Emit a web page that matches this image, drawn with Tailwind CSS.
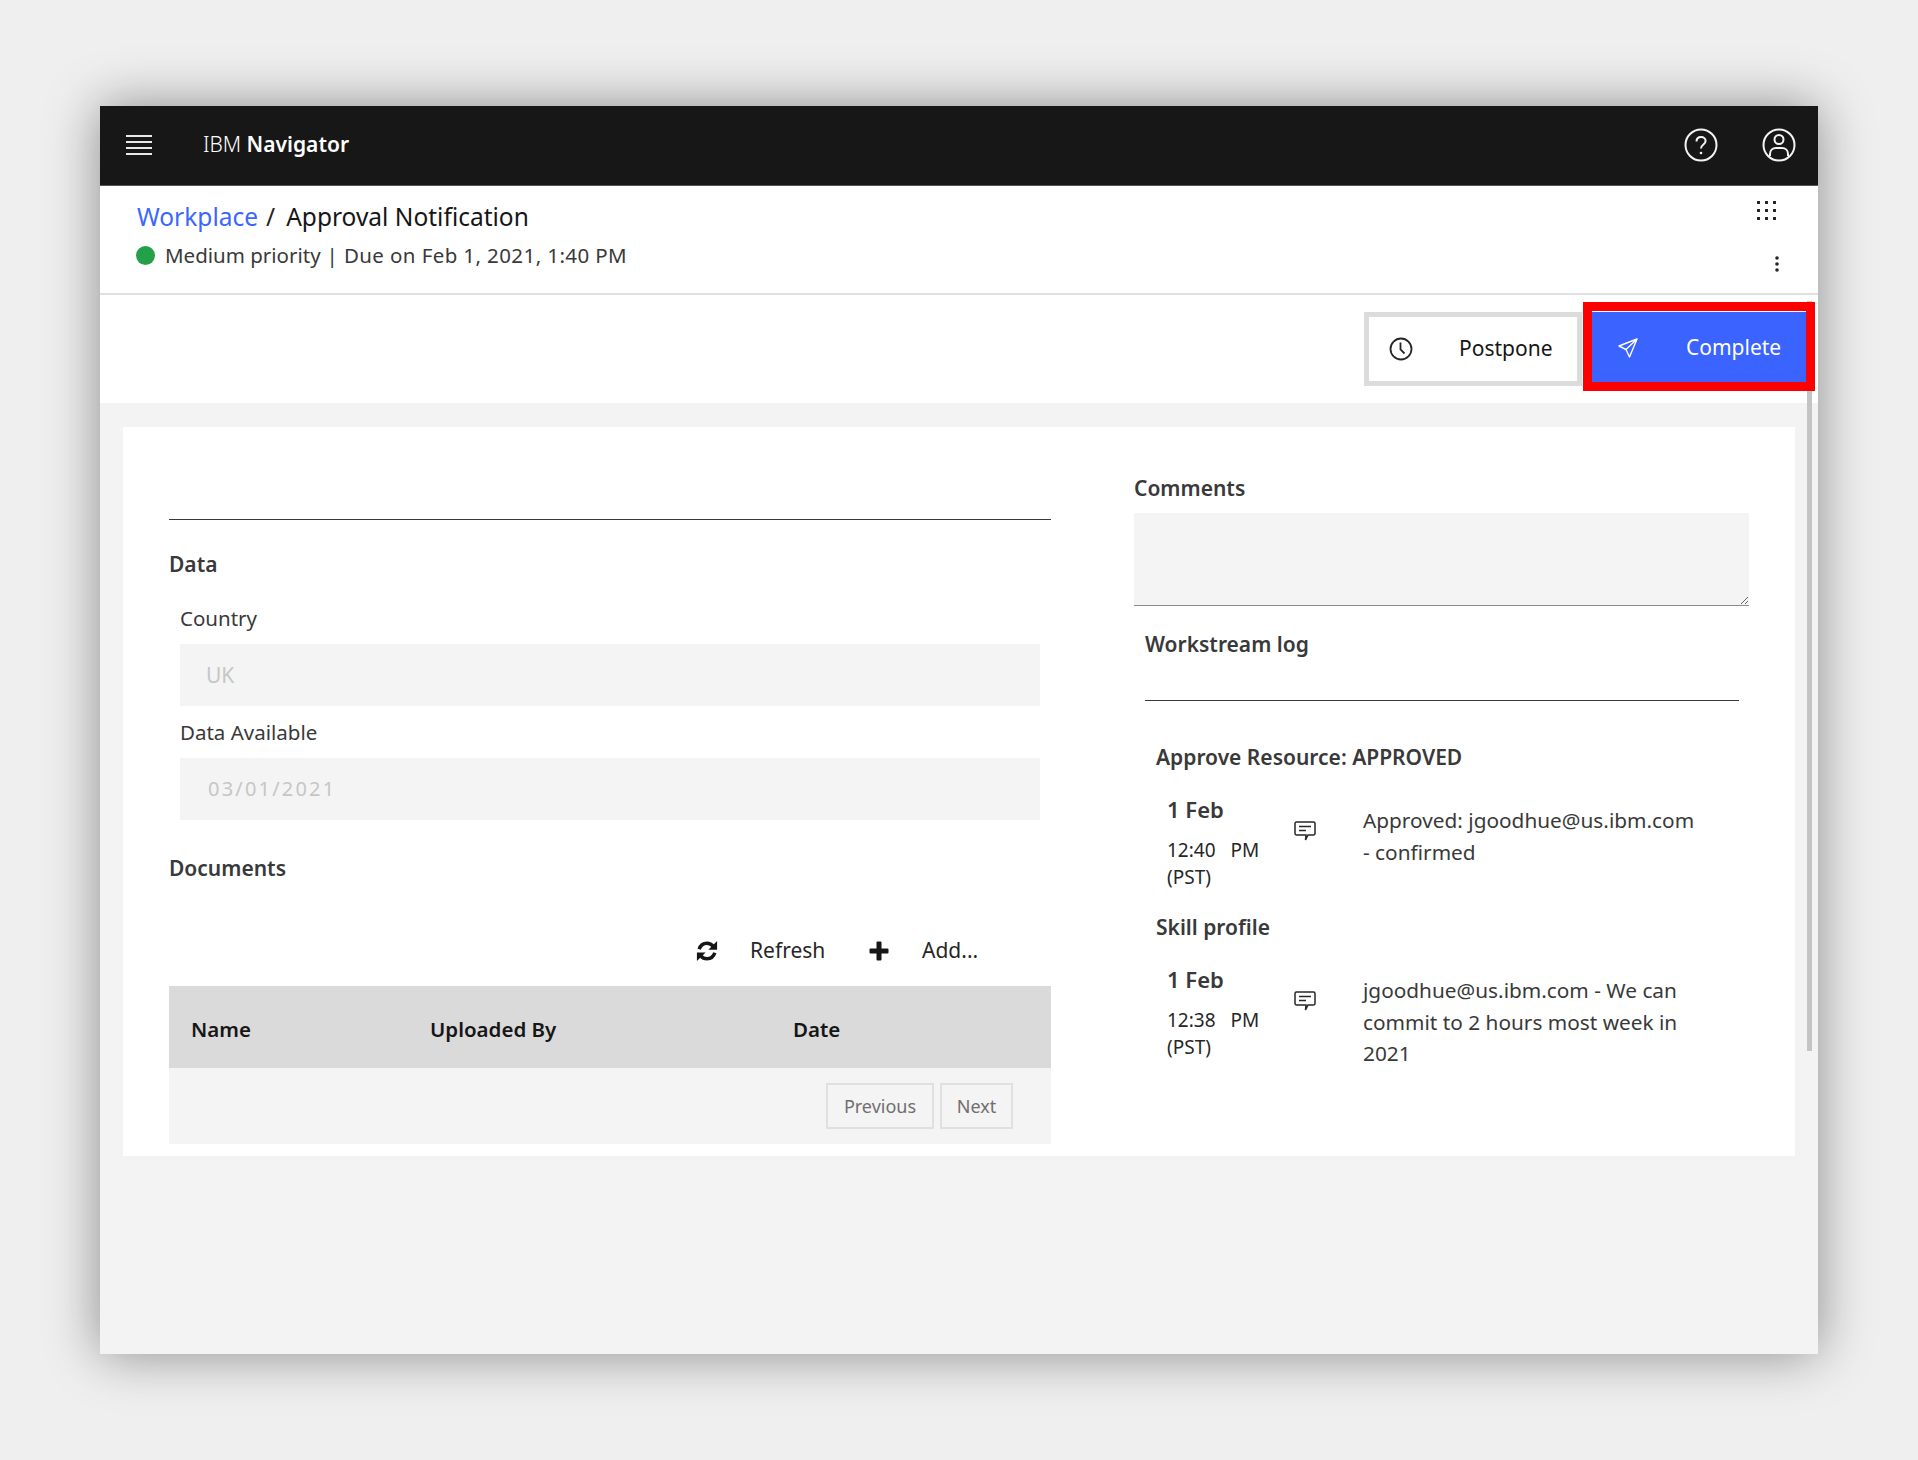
<!DOCTYPE html>
<html lang="en">
<head>
  <meta charset="UTF-8" />
  <title>IBM Navigator - Approval Notification</title>
  <script src="https://cdn.jsdelivr.net/npm/@tailwindcss/browser@4"></script>
</head>
<body class="bg-[#efefef] font-['Noto_Sans',sans-serif] text-[#262626]">
  <div class="h-[1460px] pt-[106px] pl-[100px]">
    <div class="relative w-[1718px] h-[1248px] bg-[#f3f3f3] flex flex-col shadow-[0_0_50px_rgba(0,0,0,0.42)]">

      <!-- Top bar -->
      <header class="h-[80px] shrink-0 bg-[#171717] border-b border-[#555] flex items-center text-white">
        <svg class="ml-[26px] w-[26px] h-[20px] mb-[2px]" viewBox="0 0 26 20" stroke="#e8e8e8" stroke-width="2">
          <path d="M0 1h26M0 7h26M0 13h26M0 19h26" />
        </svg>
        <div class="ml-[51px] mb-[3px] text-[21px] leading-none"><span class="font-light">IBM</span> <span class="font-semibold">Navigator</span></div>
        <div class="ml-auto mr-[22px] mb-[2px] flex items-center gap-[44px]">
          <svg class="w-[34px] h-[34px]" viewBox="0 0 34 34" fill="none" stroke="#f4f4f4" stroke-width="2">
            <circle cx="17" cy="17" r="15.500" />
            <path d="M12.500 13.500c0-2.800 2-4.500 4.600-4.500s4.500 1.700 4.500 4c0 3.600-4.600 3.300-4.600 7.500" />
            <circle cx="17" cy="25" r="1.300" fill="#f4f4f4" stroke="none" />
          </svg>
          <svg class="w-[34px] h-[34px]" viewBox="0 0 34 34" fill="none" stroke="#f4f4f4" stroke-width="2">
            <circle cx="17" cy="17" r="15.500" />
            <circle cx="17" cy="11.500" r="4.500" />
            <path d="M8 28v-2c0-3.500 2.500-6 6-6h6c3.500 0 6 2.500 6 6v2" />
          </svg>
        </div>
      </header>

      <!-- Breadcrumb and status -->
      <section class="relative h-[109px] shrink-0 bg-white border-b-2 border-[#e0e0e0] pl-[37px] pt-[17px]">
        <div class="flex items-center h-[28px] text-[24.500px] leading-none">
          <a class="text-[#3b66ff]">Workplace</a>
          <span class="ml-[8px] text-[#262626]">/</span>
          <span class="ml-[11px] text-[#161616]">Approval Notification</span>
        </div>
        <div class="flex items-center mt-[12px] h-[24px] text-[20.500px] leading-none text-[#393939]">
          <span class="w-[19px] h-[19px] -ml-[1px] rounded-full bg-[#24a148]"></span>
          <span class="ml-[10px]">Medium priority</span>
          <span class="ml-[6px]">|</span>
          <span class="ml-[6px] tracking-[0.4px]">Due on Feb 1, 2021, 1:40 PM</span>
        </div>
        <svg class="absolute right-[41px] top-[15px] w-[20px] h-[20px]" viewBox="0 0 20 20" fill="#262626">
          <rect x="0" y="0" width="3" height="3" /><rect x="8" y="0" width="3" height="3" /><rect x="16" y="0" width="3" height="3" />
          <rect x="0" y="8" width="3" height="3" /><rect x="8" y="8" width="3" height="3" /><rect x="16" y="8" width="3" height="3" />
          <rect x="0" y="16" width="3" height="3" /><rect x="8" y="16" width="3" height="3" /><rect x="16" y="16" width="3" height="3" />
        </svg>
        <svg class="absolute right-[39px] top-[70px] w-[4px] h-[16px]" viewBox="0 0 4 16" fill="#262626">
          <circle cx="2" cy="2" r="1.800" /><circle cx="2" cy="8" r="1.800" /><circle cx="2" cy="14" r="1.800" />
        </svg>
      </section>

      <!-- Actions -->
      <section class="h-[108px] shrink-0 bg-white flex justify-end items-start pr-[3px]">
        <button class="mt-[17px] w-[218px] h-[74px] border-[5px] border-[#dcdcdc] bg-white flex items-center text-[#161616] text-[21px]">
          <svg class="ml-[20px] w-[24px] h-[24px]" viewBox="0 0 24 24" fill="none" stroke="#262626" stroke-width="1.800">
            <circle cx="12" cy="12" r="10.500" />
            <path d="M11.500 5.500v7l4 4" />
          </svg>
          <span class="ml-[46px]">Postpone</span>
        </button>
        <button class="relative z-10 mt-[7px] ml-[1px] w-[232px] h-[89px] pt-[3px] border-[9px] border-[#ff0000] bg-[#3a63ff] shadow-[inset_0_1px_0_#fff] flex items-center text-white text-[21px]">
          <svg class="ml-[26px] w-[20px] h-[20px]" viewBox="0 0 20 20" fill="none" stroke="#fff" stroke-width="1.400" stroke-linejoin="round">
            <path d="M19 1 1 8l7 3.500 3.500 7.500zM8 11.500 19 1" />
          </svg>
          <span class="ml-[48px]">Complete</span>
        </button>
      </section>

      <!-- Page scrollbar -->
      <div class="absolute left-[1707px] top-[195px] w-[5px] h-[750px] bg-[#c4c4c4]"></div>

      <!-- Card -->
      <main class="px-[23px] pt-[24px]">
        <div class="h-[729px] bg-white flex">

          <!-- Left column -->
          <div class="ml-[46px] w-[882px]">
            <div class="h-[93px] border-b border-[#393939]"></div>
            <h3 class="mt-[32px] h-[24px] leading-[24px] text-[21px] font-semibold text-[#393939]">Data</h3>
            <div class="ml-[11px] mr-[11px]">
              <div class="mt-[30px] h-[24px] leading-[24px] text-[20.500px] text-[#393939]">Country</div>
              <div class="mt-[14px] h-[62px] pt-[2px] bg-[#f4f4f4] flex items-center pl-[26px] text-[21px] text-[#c6c6c6]">UK</div>
              <div class="mt-[14px] h-[24px] leading-[24px] text-[20.500px] text-[#393939]">Data Available</div>
              <div class="mt-[14px] h-[62px] bg-[#f4f4f4] flex items-center pl-[28px] text-[20px] tracking-[2.200px] text-[#c6c6c6]">03/01/2021</div>
            </div>
            <h3 class="mt-[36px] h-[24px] leading-[24px] text-[21px] font-semibold text-[#393939]">Documents</h3>
            <div class="mt-[58px] h-[26px] flex items-center text-[21px] text-[#262626]">
              <svg class="ml-[527px] w-[22px] h-[22px]" viewBox="0 0 24 24" fill="none" stroke="#161616" stroke-width="3.800">
                <path d="M3.500 10C4.800 5.800 8 3.500 12 3.500c3 0 5.200 1.300 7 3.500" />
                <path d="M20.500 14c-1.300 4.200-4.500 6.500-8.500 6.500-3 0-5.200-1.300-7-3.500" />
                <path d="M23 1v9.500h-9.500zM1 23v-9.500h9.500z" fill="#161616" stroke="none" />
              </svg>
              <span class="ml-[32px] w-[76px]">Refresh</span>
              <svg class="ml-[43px] w-[20px] h-[20px]" viewBox="0 0 20 20" fill="#161616">
                <path d="M7.500 1.500a1 1 0 0 1 1-1h3a1 1 0 0 1 1 1v6h6a1 1 0 0 1 1 1v3a1 1 0 0 1-1 1h-6v6a1 1 0 0 1-1 1h-3a1 1 0 0 1-1-1v-6h-6a1 1 0 0 1-1-1v-3a1 1 0 0 1 1-1h6z" />
              </svg>
              <span class="ml-[33px]">Add...</span>
            </div>
            <div class="mt-[22px] h-[82px] pt-[4px] bg-[#dadada] flex items-center text-[20.500px] font-semibold text-[#161616]">
              <div class="ml-[22px] w-[239px]">Name</div>
              <div class="w-[363px]">Uploaded By</div>
              <div>Date</div>
            </div>
            <div class="h-[76px] bg-[#f4f4f4] flex items-start pt-[15px] pl-[657px] gap-[6px] text-[18px] text-[#6f6f6f]">
              <div class="w-[108px] h-[46px] border-2 border-[#e0e0e0] flex items-center justify-center">Previous</div>
              <div class="w-[73px] h-[46px] border-2 border-[#e0e0e0] flex items-center justify-center">Next</div>
            </div>
          </div>

          <!-- Right column -->
          <div class="ml-[83px] w-[615px]">
            <h3 class="mt-[49px] h-[24px] leading-[24px] text-[21px] font-semibold text-[#393939]">Comments</h3>
            <textarea class="block mt-[13px] w-[615px] h-[93px] bg-[#f4f4f4] border-b border-[#8d8d8d]"></textarea>
            <div class="ml-[11px] w-[594px] mt-[26px] h-[69px] border-b border-[#393939]">
              <h3 class="h-[24px] leading-[24px] text-[21px] font-semibold text-[#393939]">Workstream log</h3>
            </div>
            <div class="ml-[22px]">
              <h4 class="mt-[44px] h-[24px] leading-[24px] text-[21px] font-semibold text-[#393939]">Approve Resource: APPROVED</h4>
              <div class="flex mt-[28px]">
                <div class="ml-[11px] w-[127px] shrink-0">
                  <div class="h-[24px] leading-[24px] text-[22px] font-semibold text-[#393939]">1 Feb</div>
                  <div class="mt-[16px] text-[19px] leading-[27px]">12:40 &nbsp; PM<br />(PST)</div>
                </div>
                <svg class="w-[22px] h-[21px] mt-[24px] shrink-0" viewBox="0 0 22 21" fill="none" stroke="#262626" stroke-width="1.500">
                  <path d="M2.500 1h17A1.500 1.500 0 0 1 21 2.500v10a1.500 1.500 0 0 1-1.500 1.500H14l-2.500 5 .5-5H2.500A1.500 1.500 0 0 1 1 12.500v-10A1.500 1.500 0 0 1 2.500 1z" />
                  <path d="M5 5.500h12M5 9.500h7" />
                </svg>
                <div class="ml-[47px] mt-[8px] w-[340px] text-[20.800px] leading-[31.500px] text-[#393939]">Approved: jgoodhue@us.ibm.com<br />- confirmed</div>
              </div>
              <h4 class="mt-[24px] h-[24px] leading-[24px] text-[21px] font-semibold text-[#393939]">Skill profile</h4>
              <div class="flex mt-[28px]">
                <div class="ml-[11px] w-[127px] shrink-0">
                  <div class="h-[24px] leading-[24px] text-[22px] font-semibold text-[#393939]">1 Feb</div>
                  <div class="mt-[16px] text-[19px] leading-[27px]">12:38 &nbsp; PM<br />(PST)</div>
                </div>
                <svg class="w-[22px] h-[21px] mt-[24px] shrink-0" viewBox="0 0 22 21" fill="none" stroke="#262626" stroke-width="1.500">
                  <path d="M2.500 1h17A1.500 1.500 0 0 1 21 2.500v10a1.500 1.500 0 0 1-1.500 1.500H14l-2.500 5 .5-5H2.500A1.500 1.500 0 0 1 1 12.500v-10A1.500 1.500 0 0 1 2.500 1z" />
                  <path d="M5 5.500h12M5 9.500h7" />
                </svg>
                <div class="ml-[47px] mt-[8px] w-[340px] text-[20.800px] leading-[31.500px] text-[#393939]">jgoodhue@us.ibm.com - We can<br />commit to 2 hours most week in<br />2021</div>
              </div>
            </div>
          </div>

        </div>
      </main>
    </div>
  </div>
</body>
</html>
